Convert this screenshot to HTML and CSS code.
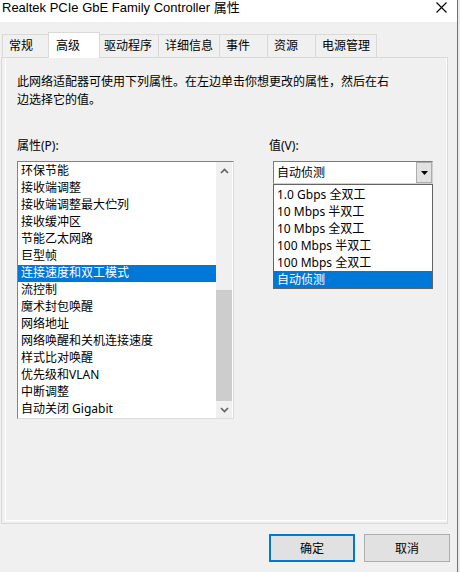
FILE: index.html
```html
<!DOCTYPE html>
<html lang="zh-CN">
<head>
<meta charset="utf-8">
<title>Realtek PCIe GbE Family Controller 属性</title>
<link rel="stylesheet" href="styles.css">
</head>
<body>
<div class="window">
  <div class="titlebar">
    <span class="title">Realtek PCIe GbE Family Controller 属性</span>
    <span class="close"><svg width="11" height="11" viewBox="0 0 11 11"><path d="M0.5 0.5 L10.5 10.5 M10.5 0.5 L0.5 10.5" stroke="#000" stroke-width="1.1" fill="none"/></svg></span>
  </div>
  <div class="content">
    <div class="tabs">
      <div class="tab">常规</div>
      <div class="tab active">高级</div>
      <div class="tab">驱动程序</div>
      <div class="tab">详细信息</div>
      <div class="tab">事件</div>
      <div class="tab">资源</div>
      <div class="tab">电源管理</div>
    </div>
    <div class="panel">
      <div class="page">
        <p class="desc">此网络适配器可使用下列属性。在左边单击你想更改的属性，然后在右边选择它的值。</p>
        <div class="columns">
          <div class="col-left">
            <div class="label">属性(P):</div>
            <div class="listbox">
              <div class="items">
                <div class="item">环保节能</div>
                <div class="item">接收端调整</div>
                <div class="item">接收端调整最大伫列</div>
                <div class="item">接收缓冲区</div>
                <div class="item">节能乙太网路</div>
                <div class="item">巨型帧</div>
                <div class="item selected">连接速度和双工模式</div>
                <div class="item">流控制</div>
                <div class="item">魔术封包唤醒</div>
                <div class="item">网络地址</div>
                <div class="item">网络唤醒和关机连接速度</div>
                <div class="item">样式比对唤醒</div>
                <div class="item">优先级和VLAN</div>
                <div class="item">中断调整</div>
                <div class="item">自动关闭 Gigabit</div>
              </div>
              <div class="scrollbar">
                <div class="sb-btn"><svg width="9" height="6" viewBox="0 0 9 6"><path d="M1 5 L4.5 1.5 L8 5" stroke="#606060" stroke-width="1.6" fill="none"/></svg></div>
                <div class="sb-track"><div class="sb-thumb"></div></div>
                <div class="sb-btn"><svg width="9" height="6" viewBox="0 0 9 6"><path d="M1 1 L4.5 4.5 L8 1" stroke="#606060" stroke-width="1.6" fill="none"/></svg></div>
              </div>
            </div>
          </div>
          <div class="col-right">
            <div class="label">值(V):</div>
            <div class="combo">
              <span class="combo-text">自动侦测</span>
              <span class="combo-btn"><svg width="7" height="4" viewBox="0 0 7 4"><path d="M0 0 L7 0 L3.5 4 Z" fill="#000"/></svg></span>
              <div class="dropdown">
                <div class="ditem">1.0 Gbps 全双工</div>
                <div class="ditem">10 Mbps 半双工</div>
                <div class="ditem">10 Mbps 全双工</div>
                <div class="ditem">100 Mbps 半双工</div>
                <div class="ditem">100 Mbps 全双工</div>
                <div class="ditem selected">自动侦测</div>
              </div>
            </div>
          </div>
        </div>
      </div>
    </div>
    <div class="buttons">
      <button class="btn default">确定</button>
      <button class="btn">取消</button>
    </div>
  </div>
</div>
</body>
</html>
```
FILE: styles.css
```css
html, body {
  margin: 0;
  padding: 0;
}
body {
  width: 460px;
  height: 572px;
  overflow: hidden;
  background: #ebebeb;
  font-family: "Noto Sans", "Noto Sans CJK SC", sans-serif;
  font-size: 12px;
  color: #000;
}
.window {
  width: 458px;
  height: 572px;
  box-sizing: border-box;
  border-right: 1px solid #707070;
  background: #f0f0f0;
  display: flex;
  flex-direction: column;
}
.titlebar {
  height: 22px;
  flex: none;
  background: #fff;
  display: flex;
  align-items: flex-start;
}
.title {
  font-family: "Liberation Sans", "Noto Sans CJK SC", sans-serif;
  font-size: 13px;
  line-height: 16px;
  padding-left: 2px;
}
.close {
  margin-left: auto;
  margin-right: 10px;
  margin-top: 2px;
  display: flex;
}
.content {
  display: flex;
  flex-direction: column;
  flex: 1;
}
.tabs {
  display: flex;
  align-items: flex-end;
  height: 26px;
  margin-top: 10px;
  margin-bottom: -1px;
  padding-left: 3px;
}
.tab {
  height: 23px;
  margin-bottom: 1px;
  margin-left: -1px;
  box-sizing: border-box;
  min-width: 49px;
  padding: 0 6px;
  border: 1px solid #d9d9d9;
  border-bottom: none;
  background: #f0f0f0;
  line-height: 22px;
  white-space: nowrap;
}
.tab.active {
  position: relative;
  z-index: 1;
  height: 26px;
  margin: 0 -2px 0 -3px;
  min-width: 52px;
  padding-left: 7px;
  background: #fff;
  line-height: 25px;
}
.panel {
  margin-left: 1px;
  width: 447px;
  height: 467px;
  box-sizing: border-box;
  border: 1px solid #d9d9d9;
  background: #f0f0f0;
  padding: 0 0 2px 3px;
  flex: none;
}
.page {
  height: 100%;
  box-sizing: border-box;
  border: 1px solid #fff;
  border-top: none;
  padding: 15px 0 0 11px;
}
.desc {
  margin: 0;
  width: 380px;
  line-height: 18px;
}
.columns {
  display: flex;
  gap: 35px;
  margin-top: 28px;
}
.label {
  line-height: 18px;
  margin-bottom: 6px;
}
.col-left {
  width: 217px;
}
.listbox {
  height: 258px;
  box-sizing: border-box;
  border: 1px solid #828282;
  border-right-color: #dcdcdc;
  border-bottom-color: #dcdcdc;
  padding: 0 1px 0 0;
  background: #fff;
  display: flex;
}
.items {
  width: 198px;
  padding-top: 1px;
  overflow: hidden;
}
.item {
  height: 17px;
  line-height: 16px;
  padding-left: 3px;
  white-space: nowrap;
}
.item.selected, .ditem.selected {
  background: #0078d7;
  color: #fff;
}
.scrollbar {
  width: 16px;
  background: #f0f0f0;
  display: flex;
  flex-direction: column;
}
.sb-btn {
  height: 17px;
  flex: none;
  display: flex;
  align-items: center;
  justify-content: center;
}
.sb-track {
  flex: 1;
  display: flex;
  flex-direction: column;
  justify-content: flex-end;
}
.sb-thumb {
  height: 111px;
  background: #cdcdcd;
}
.col-right {
  width: 170px;
}
.combo {
  position: relative;
  margin-left: 4px;
  width: 160px;
  height: 23px;
  box-sizing: border-box;
  border: 1px solid #7a7a7a;
  border-right-color: #d0d0d0;
  border-bottom-color: #d0d0d0;
  background: #fff;
  display: flex;
}
.combo-text {
  flex: 1;
  padding-left: 3px;
  line-height: 21px;
}
.combo-btn {
  width: 16px;
  box-sizing: border-box;
  background: #e1e1e1;
  border: 1px solid #adadad;
  display: flex;
  align-items: center;
  justify-content: center;
}
.dropdown {
  position: absolute;
  top: 22px;
  left: -1px;
  width: 160px;
  box-sizing: border-box;
  border: 1px solid #646464;
  background: #fff;
  padding-top: 1px;
  z-index: 2;
}
.ditem {
  height: 17px;
  line-height: 17px;
  padding-left: 3px;
  white-space: nowrap;
}
.buttons {
  display: flex;
  justify-content: flex-end;
  gap: 9px;
  margin-top: 10px;
  padding-right: 7px;
}
.btn {
  width: 86px;
  height: 28px;
  box-sizing: border-box;
  background: #e1e1e1;
  border: 1px solid #adadad;
  font-family: "Noto Sans", "Noto Sans CJK SC", sans-serif;
  font-size: 12px;
  color: #000;
  padding: 0;
}
.btn.default {
  border: 2px solid #0078d7;
}
```
